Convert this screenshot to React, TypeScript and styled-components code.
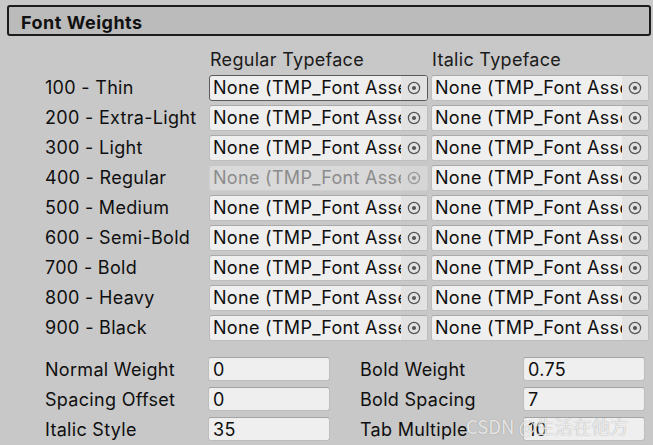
import React from "react";
import styled, { createGlobalStyle } from "styled-components";

const GlobalStyle = createGlobalStyle`
  html, body {
    margin: 0;
    padding: 0;
    background: #c8c8c8;
  }
  body {
    font-family: Inter, "Noto Sans", sans-serif;
    color: #0f0f0f;
    letter-spacing: 0.3px;
  }
`;

const Inspector = styled.div`
  width: 653px;
  height: 445px;
  overflow: hidden;
  box-sizing: border-box;
  padding: 5px 2px 0 7px;
`;

const Foldout = styled.div`
  height: 31px;
  box-sizing: border-box;
  border: 2px solid #1c1c1c;
  border-radius: 3px;
  background: #bbbbbb;
  display: flex;
  align-items: center;
  padding-left: 12px;
  padding-top: 3px;
  font-size: 18px;
  font-weight: 700;
  letter-spacing: 0.5px;
  color: #111;
`;

const WeightGrid = styled.div`
  display: grid;
  grid-template-columns: 161px 219px 218px;
  column-gap: 3px;
  row-gap: 4px;
  padding-left: 38px;
  margin-top: 9px;
`;

const ColumnHead = styled.div`
  font-size: 18px;
  height: 30px;
  line-height: 30px;
  margin-bottom: -4px;
  padding-left: 1px;
  color: #1a1a1a;
`;

const RowLabel = styled.div`
  font-size: 18px;
  height: 26px;
  line-height: 26px;
  white-space: nowrap;
`;

const ObjectField = styled.div<{ $disabled?: boolean; $focused?: boolean }>`
  height: 26px;
  box-sizing: border-box;
  display: flex;
  align-items: stretch;
  border-radius: 3px;
  border: 1px solid ${(p) => (p.$focused ? "#5a5a5a" : p.$disabled ? "#cfcfcf" : "#bdbdbd")};
  border-top-color: ${(p) => (p.$focused ? "#5a5a5a" : p.$disabled ? "#c6c6c6" : "#a9a9a9")};
  background: ${(p) => (p.$disabled ? "#d9d9d9" : "#efefef")};
  color: ${(p) => (p.$disabled ? "#8c8c8c" : "#0f0f0f")};
  overflow: hidden;
`;

const FieldText = styled.div`
  flex: 1;
  min-width: 0;
  font-size: 18px;
  line-height: 24px;
  padding-left: 3px;
  white-space: nowrap;
  overflow: hidden;
`;

const PickerButton = styled.div<{ $disabled?: boolean }>`
  width: 26px;
  flex: none;
  display: flex;
  align-items: center;
  justify-content: center;
  background: ${(p) => (p.$disabled ? "#d6d6d6" : "#e2e2e2")};
`;

const Settings = styled.div`
  display: grid;
  grid-template-columns: 163px 122px 30px 163px 122px;
  row-gap: 6px;
  padding-left: 38px;
  margin-top: 16px;
`;

const SettingLabel = styled.div`
  font-size: 18px;
  height: 24px;
  line-height: 25px;
  white-space: nowrap;
`;

const NumberField = styled.div`
  height: 24px;
  box-sizing: border-box;
  border-radius: 3px;
  border: 1px solid #bdbdbd;
  border-top-color: #a3a3a3;
  background: #efefef;
  font-size: 18px;
  line-height: 23px;
  padding-left: 4px;
`;

const Spacer = styled.div``;

const Watermark = styled.div`
  position: absolute;
  left: 466px;
  top: 413px;
  font-family: "Noto Sans CJK SC", "Noto Sans", sans-serif;
  font-size: 18.5px;
  letter-spacing: 0;
  color: rgba(255, 255, 255, 0.8);
  text-shadow: 0 0 1px rgba(90, 90, 90, 0.6);
  white-space: nowrap;
  pointer-events: none;
`;

const PickerIcon = ({ disabled }: { disabled?: boolean }) => (
  <svg width="14" height="14" viewBox="0 0 14 14">
    <circle cx="7" cy="7" r="5.6" fill="none" stroke={disabled ? "#9a9a9a" : "#555"} strokeWidth="1.3" />
    <circle cx="7" cy="7" r="2.1" fill={disabled ? "#9a9a9a" : "#555"} />
  </svg>
);

const weights = [
  "100 - Thin",
  "200 - Extra-Light",
  "300 - Light",
  "400 - Regular",
  "500 - Medium",
  "600 - Semi-Bold",
  "700 - Bold",
  "800 - Heavy",
  "900 - Black",
];

const FontSlot = ({ disabled, focused }: { disabled?: boolean; focused?: boolean }) => (
  <ObjectField $disabled={disabled} $focused={focused}>
    <FieldText>None (TMP_Font Asset)</FieldText>
    <PickerButton $disabled={disabled}>
      <PickerIcon disabled={disabled} />
    </PickerButton>
  </ObjectField>
);

const settings: [string, string, string, string][] = [
  ["Normal Weight", "0", "Bold Weight", "0.75"],
  ["Spacing Offset", "0", "Bold Spacing", "7"],
  ["Italic Style", "35", "Tab Multiple", "10"],
];

export default function App() {
  return (
    <>
      <GlobalStyle />
      <Inspector>
        <Foldout>Font Weights</Foldout>
        <WeightGrid>
          <Spacer />
          <ColumnHead>Regular Typeface</ColumnHead>
          <ColumnHead>Italic Typeface</ColumnHead>
          {weights.map((w, i) => (
            <React.Fragment key={w}>
              <RowLabel>{w}</RowLabel>
              <FontSlot disabled={i === 3} focused={i === 0} />
              <FontSlot />
            </React.Fragment>
          ))}
        </WeightGrid>
        <Settings>
          {settings.map(([a, av, b, bv]) => (
            <React.Fragment key={a}>
              <SettingLabel>{a}</SettingLabel>
              <NumberField>{av}</NumberField>
              <Spacer />
              <SettingLabel>{b}</SettingLabel>
              <NumberField>{bv}</NumberField>
            </React.Fragment>
          ))}
        </Settings>
      </Inspector>
      <Watermark>CSDN @生活在他方</Watermark>
    </>
  );
}
